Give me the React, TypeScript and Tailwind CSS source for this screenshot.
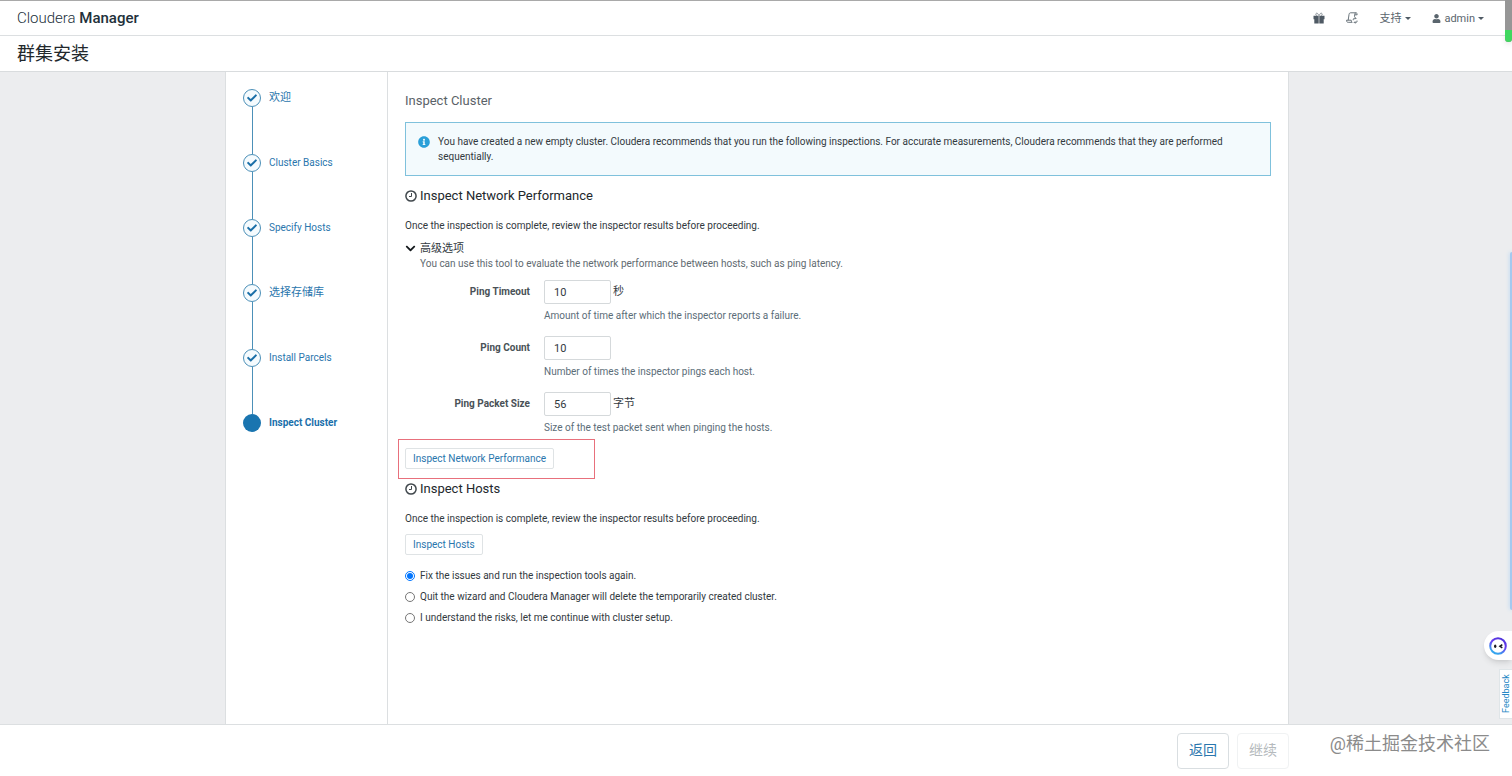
import { useState } from "react";
import { FaCheck, FaChevronDown, FaInfoCircle, FaUser } from "react-icons/fa";

const steps = [
  { name: "欢迎", size: "text-[11px]" },
  { name: "Cluster Basics", size: "text-[10px]" },
  { name: "Specify Hosts", size: "text-[10px]" },
  { name: "选择存储库", size: "text-[11px]" },
  { name: "Install Parcels", size: "text-[10px]" },
  { name: "Inspect Cluster", size: "text-[10px]" },
];

const fields = [
  { id: "ping-timeout", label: "Ping Timeout", value: "10", unit: "秒", help: "Amount of time after which the inspector reports a failure." },
  { id: "ping-count", label: "Ping Count", value: "10", unit: "", help: "Number of times the inspector pings each host." },
  { id: "ping-packet-size", label: "Ping Packet Size", value: "56", unit: "字节", help: "Size of the test packet sent when pinging the hosts." },
];

const choices = [
  "Fix the issues and run the inspection tools again.",
  "Quit the wizard and Cloudera Manager will delete the temporarily created cluster.",
  "I understand the risks, let me continue with cluster setup.",
];

function ClockIcon() {
  return (
    <svg viewBox="0 0 12 12" className="size-3 shrink-0" fill="none" stroke="#41484d" aria-hidden="true">
      <circle cx="6" cy="6" r="5.1" strokeWidth="1.5" />
      <path d="M6.5 3v3.5H4" strokeWidth="1" />
    </svg>
  );
}

function GiftIcon() {
  return (
    <svg viewBox="0 0 12 12" className="size-3" fill="#4f5a64" aria-hidden="true">
      <path d="M.5 3.8h5.2v7.7H1.3V7.2H.5zM6.3 3.8h5.2v3.4h-.8v4.3H6.3z" />
      <path d="M5.8 3.6C5.2 1.9 4.4 1 3.6 1.2 2.4 1.5 2.6 3.4 3.9 3.6M6.2 3.6C6.8 1.9 7.6 1 8.4 1.2c1.2.3 1 2.2-.3 2.4" fill="none" stroke="#7c858c" strokeWidth="0.9" />
    </svg>
  );
}

function CommandsIcon() {
  return (
    <svg viewBox="0 0 12 12" className="size-3" fill="none" stroke="#5a656d" strokeWidth="0.9" aria-hidden="true">
      <path d="M6 10.3H2.2C.9 10.3.4 9.4.6 8.2h4.6c.1 1.2.4 1.9 1.2 2.1M2.2 8.2 3 2.6C3.2 1.3 3.7.8 4.7.8h5.2c-.9.3-1.1 1-1.2 2l-.2 2M9.9.8c1.1.1 1.4.8 1.2 2H8.8" />
      <path d="M7.3 8.2V7.4a1.3 1.3 0 0 1 1.3-1.1h1.2M9 5.3l1 1-1 1M11 8.6v.8a1.3 1.3 0 0 1-1.3 1.1H8.5M9.2 9.4l-1 1 1 1" strokeWidth="1" />
    </svg>
  );
}

function Caret() {
  return (
    <svg viewBox="0 0 6 3" className="h-[3px] w-[6px]" fill="#4f5a64" aria-hidden="true">
      <path d="M0 0h6L3 3z" />
    </svg>
  );
}

function SectionTitle({ children }: { children: string }) {
  return (
    <h3 className="mt-[10px] flex items-center gap-[3px] text-[13px] leading-5 text-[#22282c]">
      <ClockIcon />
      {children}
    </h3>
  );
}

function SmallButton({ children }: { children: string }) {
  return (
    <button className="block h-[21px] rounded-xs border border-[#dfe3e5] bg-white px-[7px] text-[10px] leading-4 text-[#2a76ad]">
      {children}
    </button>
  );
}

export default function App() {
  const [open, setOpen] = useState(true);
  const [choice, setChoice] = useState(0);

  return (
    <div className="relative flex min-h-screen flex-col overflow-x-hidden bg-white font-['Roboto','Noto_Sans_CJK_SC',sans-serif] text-[10px] leading-[15px] text-[#32393e]">
      <header className="flex h-9 items-center justify-between border-t border-b border-t-[#a9a9a9] border-b-[#dcdfe1] pr-7 pl-[17px]">
        <a href="#home" className="text-[15px] leading-5 font-light text-[#22303a]">
          Cloudera <span className="font-medium">Manager</span>
        </a>
        <nav className="flex items-center gap-[21px] text-[11px] text-[#5a656d]">
          <a href="#parcels" aria-label="What's new"><GiftIcon /></a>
          <a href="#commands" aria-label="Running commands"><CommandsIcon /></a>
          <button className="flex items-center gap-1">支持<Caret /></button>
          <button className="flex items-center gap-[3px]"><FaUser size={9} />admin<Caret /></button>
        </nav>
      </header>
      <div className="flex h-9 items-center border-b border-[#d9dcde] pl-[17px]">
        <h1 className="text-[18px] leading-6 text-[#22282c]">群集安装</h1>
      </div>

      <main className="flex grow justify-center bg-[#ecedef] pl-0.5">
        <div className="flex w-full max-w-[1064px] border-x border-[#dcdfe1] bg-white">
          <ol className="w-[162px] shrink-0 border-r border-[#dcdfe1] pt-[17px] pl-[17px]">
            {steps.map(({ name, size }, i) => {
              const current = i === steps.length - 1;
              return (
                <li key={name} className={current ? "flex gap-2" : "flex h-[65px] gap-2"}>
                  <div className="flex w-[18px] flex-col items-center">
                    {current ? (
                      <span className="size-[18px] rounded-full bg-[#1a75b0]" />
                    ) : (
                      <span className="flex size-[18px] shrink-0 items-center justify-center rounded-full border border-[#4c90b8] bg-[#f5fbfe] text-[#1a6fa8]">
                        <FaCheck size={10} />
                      </span>
                    )}
                    {!current && <span className="w-px grow bg-[#4c90b8]" />}
                  </div>
                  <a href={`#step-${i + 1}`} className={`${size} leading-[18px] ${current ? "font-bold text-[#1a70ab]" : "text-[#2a76ad]"}`}>
                    {name}
                  </a>
                </li>
              );
            })}
          </ol>

          <section className="min-w-0 grow px-[17px] pt-[19px] pb-8">
            <h2 className="text-[13px] leading-5 text-[#5a6268]">Inspect Cluster</h2>
            <div className="mt-[11px] flex gap-2 border border-[#7fc1dc] bg-[#f3fafd] px-3 py-[11px]">
              <FaInfoCircle size={12} className="mt-[2px] shrink-0 text-[#2a9fd8]" />
              <p className="max-w-[814px]">
                You have created a new empty cluster. Cloudera recommends that you run the following inspections. For accurate
                measurements, Cloudera recommends that they are performed sequentially.
              </p>
            </div>

            <SectionTitle>Inspect Network Performance</SectionTitle>
            <p className="mt-3">Once the inspection is complete, review the inspector results before proceeding.</p>
            <button className="mt-2 flex items-center gap-1 text-[11px]" aria-expanded={open} onClick={() => setOpen(!open)}>
              <FaChevronDown size={11} className="text-[#14191c]" />
              高级选项
            </button>
            {open && (
              <>
                <p className="pl-[15px] text-[#616a70]">
                  You can use this tool to evaluate the network performance between hosts, such as ping latency.
                </p>
                <div className="mt-[9px] flex flex-col gap-3">
                  {fields.map((f) => (
                    <div key={f.id} className="grid grid-cols-[125px_1fr] gap-x-[14px]">
                      <label htmlFor={f.id} className="text-right leading-6 font-bold text-[#4a5257]">{f.label}</label>
                      <div>
                        <div className="flex gap-[2px] text-[11px]">
                          <input
                            id={f.id}
                            defaultValue={f.value}
                            className="h-6 w-[67px] rounded-xs border border-[#d5d9db] bg-white px-[9px] text-[#32393e]"
                          />
                          <span className="leading-6">{f.unit}</span>
                        </div>
                        <p className="mt-1 leading-4 text-[#5b6d78]">{f.help}</p>
                      </div>
                    </div>
                  ))}
                </div>
              </>
            )}
            <div className="relative mt-3">
              <SmallButton>Inspect Network Performance</SmallButton>
              <div className="pointer-events-none absolute -top-[9px] -left-[7px] h-10 w-[197px] border border-[#e8707c]" />
            </div>

            <SectionTitle>Inspect Hosts</SectionTitle>
            <p className="mt-3 mb-2">Once the inspection is complete, review the inspector results before proceeding.</p>
            <SmallButton>Inspect Hosts</SmallButton>

            <fieldset className="mt-[10px]">
              {choices.map((text, i) => (
                <label key={text} className="flex h-[21px] items-center gap-[5px]">
                  <input type="radio" name="next" checked={choice === i} onChange={() => setChoice(i)} className="size-[10px]" />
                  {text}
                </label>
              ))}
            </fieldset>
          </section>
        </div>
      </main>

      <footer className="flex h-[52px] items-center justify-center border-t border-[#dcdfe1] pl-0.5">
        <div className="flex w-full max-w-[1064px] justify-end gap-2 text-[14px]">
          <button className="h-9 w-[52px] rounded-sm border border-[#d9dee1] text-[#2a76ad]">返回</button>
          <button disabled className="h-9 w-[52px] rounded-sm border border-[#f0f2f3] text-[#b5babd]">继续</button>
        </div>
      </footer>

      <div className="absolute right-[22px] bottom-5 text-[18px] leading-6 text-[#8b8b8b]">@稀土掘金技术社区</div>
      <div className="absolute top-0 right-0 flex h-[42px] w-[7px] flex-col rounded-b bg-[#969696] pr-0.5">
        <span className="-mr-0.5 mt-auto h-3 rounded-b bg-[#40d75f] shadow-md" />
      </div>
      <div className="absolute top-[252px] right-0 h-[358px] w-[2px] rounded-l bg-[#a5c9ef] shadow-[0_0_4px_#a5cdf5]" />
      <button aria-label="Assistant" className="absolute right-0 bottom-[116px] flex h-[29px] w-7 items-center rounded-l-full bg-white pl-[5px] shadow-md">
        <svg viewBox="0 0 18 18" className="size-[18px]" aria-hidden="true">
          <defs>
            <linearGradient id="ring" x1="1" y1="0" x2="0.5" y2="1">
              <stop offset="0" stopColor="#4530d4" />
              <stop offset="0.5" stopColor="#6b3df0" />
              <stop offset="1" stopColor="#35a5ee" />
            </linearGradient>
          </defs>
          <circle cx="9" cy="9" r="7.8" fill="#fff" stroke="url(#ring)" strokeWidth="2" />
          <ellipse cx="6.2" cy="9.3" rx="1.2" ry="1.8" fill="#171722" />
          <path d="M13.3 7.7 11 9.3l2.3 1.6" fill="none" stroke="#171722" strokeWidth="1.6" />
        </svg>
      </button>
      <button className="absolute right-0 bottom-[57px] h-[50px] w-[13px] border border-r-0 border-[#dfe5e8] bg-white text-[9px] leading-3 text-[#2587c5]">
        <span className="flex h-full rotate-180 items-center justify-center [writing-mode:vertical-rl]">Feedback</span>
      </button>
    </div>
  );
}
